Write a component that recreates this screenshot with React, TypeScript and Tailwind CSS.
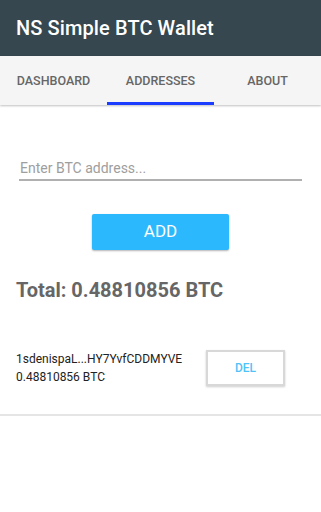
import React, { useState } from 'react';

const tabs = ['DASHBOARD', 'ADDRESSES', 'ABOUT'];

export default function App() {
  const [address, setAddress] = useState('');

  return (
    <div className="w-[321px] h-[512px] bg-white flex flex-col font-[Roboto,'Liberation_Sans',sans-serif]">
      {/* Action bar */}
      <div className="h-[56px] bg-[#36474f] flex items-center px-4">
        <h1 className="text-white text-[20px] font-medium tracking-[0.1px]">NS Simple BTC Wallet</h1>
      </div>

      {/* Tabs */}
      <div className="h-[49px] bg-[#f5f5f5] flex shadow-[0_1px_2px_rgba(0,0,0,0.25)] relative z-10">
        {tabs.map((t) => (
          <div
            key={t}
            className={
              'flex-1 flex items-center justify-center text-[12.5px] font-medium text-[#666] border-b-[3px] ' +
              (t === 'ADDRESSES' ? 'border-[#1a3dff]' : 'border-transparent')
            }
          >
            <span className="pt-[5px]">{t}</span>
          </div>
        ))}
      </div>

      {/* Add address */}
      <div className="px-[19px] pt-[51px]">
        <input
          value={address}
          onChange={(e) => setAddress(e.target.value)}
          placeholder="Enter BTC address..."
          className="w-[283px] h-[22px] text-[14px] text-[#333] placeholder-[#9e9e9e] border-b-[2px] border-[#b0b0b0] outline-none px-[1px] pb-[1px] bg-transparent"
        />
      </div>
      <div className="flex justify-center pt-[33px]">
        <button className="w-[137px] h-[36px] bg-[#2cb8fc] text-white text-[17px] rounded-[2px] shadow-[0_1px_2px_rgba(0,0,0,0.3)]">
          ADD
        </button>
      </div>

      <div className="px-4 pt-[28px] text-[20px] leading-[24px] font-bold text-[#666]">Total: 0.48810856 BTC</div>

      {/* Address list */}
      <div className="flex items-center px-4 pt-[48px] pb-[28px] border-b-[2px] border-[#e5e5e5]">
        <div className="w-[190px] text-[12px] text-[#222] leading-[18px]">
          <div>1sdenispaL...HY7YvfCDDMYVE</div>
          <div>0.48810856 BTC</div>
        </div>
        <button className="w-[79px] h-[36px] bg-white border-[2px] border-[#d8d8d8] shadow-[0_1px_2px_rgba(0,0,0,0.2)] text-[#4fc3f7] text-[12px] font-medium">
          DEL
        </button>
      </div>
    </div>
  );
}
